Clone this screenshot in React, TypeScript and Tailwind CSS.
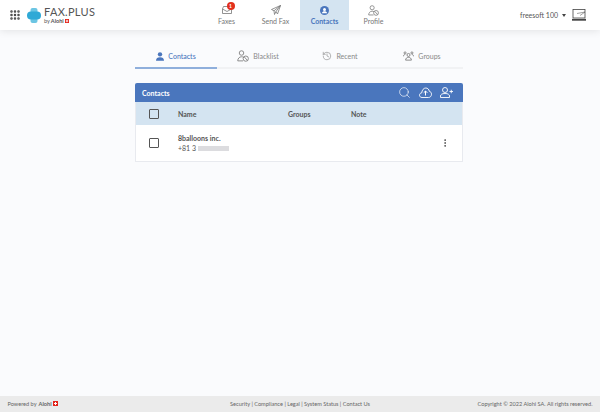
import { FC, ReactNode } from "react";
import { EllipsisVertical, Grip, History, Search } from "lucide-react";

const Flag: FC<{ size: number }> = ({ size }) => (
  <svg width={size} height={size} viewBox="0 0 10 10" className="shrink-0">
    <rect width="10" height="10" fill="#e2231a" />
    <path d="M4 2h2v2h2v2H6v2H4V6H2V4h2z" fill="#fff" />
  </svg>
);

const Logo = () => (
  <svg width="14" height="15" viewBox="0 0 14 15">
    <rect x="3.500" y="0" width="7" height="15" rx="2" fill="#6cc5e3" />
    <rect x="0" y="3.500" width="14" height="8" rx="4" fill="#2fa9d6" />
  </svg>
);

const MailIcon = () => (
  <svg width="10" height="8" viewBox="0 0 10 8" fill="none" stroke="#777" strokeWidth="0.8">
    <path d="M1.500 .5h7l1 2.500v4.500H.5V3z" />
    <path d="M.5 3 5 5.500 9.500 3" />
  </svg>
);

const PlaneIcon = () => (
  <svg width="10" height="10" viewBox="0 0 10 10" fill="none" stroke="#777" strokeWidth="0.8">
    <path d="M9.500 .5 .5 4.500l2.500 1.300L9.500 .5 5 6.500l1.500 2.500zM3 5.800 3.500 9.500 5 6.500" />
  </svg>
);

const UsersOutline: FC<{ size?: number }> = ({ size = 11 }) => (
  <svg width={size} height={size} viewBox="0 0 16 16" fill="none" stroke="#777" strokeWidth="1.100">
    <circle cx="6" cy="4" r="3" />
    <path d="M1 14.500c0-3 2-5.500 5-5.500 1 0 2 .3 2.700 .8" />
    <path d="M1 14.500h7" />
    <circle cx="11.700" cy="11.500" r="3.500" />
    <path d="M9.500 9l4.500 5" />
  </svg>
);

const GroupIcon = () => (
  <svg width="11" height="10" viewBox="0 0 16 14" fill="none" stroke="#777" strokeWidth="1.200">
    <circle cx="8" cy="5.500" r="2.200" />
    <path d="M3.800 13c0-2.600 1.800-4 4.200-4s4.200 1.400 4.200 4z" />
    <circle cx="3" cy="2.500" r="1.500" />
    <circle cx="13" cy="2.500" r="1.500" />
    <path d="M.5 7.500c0-1.500 1-2.500 2.500-2.500M15.500 7.500c0-1.500-1-2.500-2.500-2.500" />
  </svg>
);

const PersonSolid: FC<{ color: string }> = ({ color }) => (
  <svg width="8" height="9" viewBox="0 0 11 12" fill={color}>
    <circle cx="5.500" cy="3" r="3" />
    <path d="M0 12c0-3.600 2-5 5.500-5s5.500 1.400 5.500 5z" />
  </svg>
);

const ContactBadge = () => (
  <svg width="9" height="9" viewBox="0 0 12 12">
    <circle cx="6" cy="6" r="6" fill="#4a76bd" />
    <circle cx="6" cy="4.500" r="2" fill="#fff" />
    <path d="M2.500 9.500c.5-1.800 1.800-2.500 3.500-2.500s3 .7 3.500 2.500z" fill="#fff" />
  </svg>
);

const Laptop = () => (
  <svg width="14" height="12" viewBox="0 0 14 12" fill="none" stroke="#444" strokeWidth="0.8">
    <rect x="1" y="0.500" width="12" height="8.500" />
    <path d="M5 4.500l8-1.500M8 6.500l5-3.500" strokeWidth="0.5" />
    <path d="M0 10.800h14" strokeWidth="1.800" />
  </svg>
);

const CloudIcon = () => (
  <svg width="13" height="11" viewBox="0 0 13 11" fill="none" stroke="#fff" strokeWidth="0.9">
    <path d="M3 10.500C1.500 10.500.5 9.500.5 8.200c0-1.300 1-2.300 2.200-2.300C3 3 4.700 1 6.800 1c1.900 0 3.300 1.500 3.500 3.300 1.300.2 2.200 1.400 2.200 2.900 0 1.800-1.200 3.300-3 3.300z" />
    <path d="M6.500 8.500V4M4.700 5.800 6.500 4l1.800 1.800" strokeWidth="1" />
  </svg>
);

const AddUserIcon = () => (
  <svg width="13" height="11" viewBox="0 0 13 11" fill="none" stroke="#fff" strokeWidth="0.9">
    <circle cx="5" cy="3" r="2.500" />
    <path d="M.5 10.500V9c0-1.500 1.500-2.500 4.500-2.500S9.500 7.500 9.500 9v1.500z" />
    <path d="M9.500 4.500h3.500M11.250 2.750v3.500" />
  </svg>
);

const NavItem: FC<{ label: string; icon: ReactNode; active?: boolean }> = ({
  label,
  icon,
  active,
}) => (
  <div
    className={`w-[49px] h-full flex flex-col items-center pt-[5px] ${
      active ? "bg-[#d4e4f1] text-[#4a76bd] font-bold" : "text-[#777]"
    }`}
  >
    <div className="h-[10px] flex items-center justify-center relative">{icon}</div>
    <span className="text-[7px] leading-[10px] mt-[1px]">{label}</span>
  </div>
);

const TabItem: FC<{ label: string; icon: ReactNode; active?: boolean }> = ({
  label,
  icon,
  active,
}) => (
  <div
    className={`flex-1 flex items-center justify-center gap-[4px] text-[7px] border-b-2 ${
      active
        ? "border-[#8fafdc] text-[#4a76bd] font-medium"
        : "border-[#f1f2f4] text-[#888]"
    }`}
  >
    {icon}
    <span>{label}</span>
  </div>
);

const Checkbox = () => (
  <div className="w-[8px] h-[8px] border border-[#555] rounded-[1px] box-content" />
);

const rowColumns = "grid grid-cols-[42px_110px_63px_1fr_35px] items-center";

export default function App() {
  return (
    <div className="w-[600px] h-[412px] flex flex-col bg-[#fafbfd] font-['Lato','Noto_Sans',sans-serif] overflow-hidden">
      <header className="h-[30px] shrink-0 bg-white flex items-center shadow-[0_1px_8px_rgba(0,0,0,0.1)] relative">
        <div className="w-[202px] flex items-center h-full">
          <Grip size={12} strokeWidth={3} color="#444" className="ml-[9px]" />
          <div className="ml-[6px]">
            <Logo />
          </div>
          <div className="ml-[3px] flex flex-col">
            <span className="text-[11px] leading-[12px] text-[#555] tracking-[0.3px]">FAX.PLUS</span>
            <span className="flex items-center gap-[1px] text-[5.500px] leading-[7px] text-[#555]">
              by <b>Alohi</b> <Flag size={4} />
            </span>
          </div>
        </div>

        <nav className="flex h-full">
          <NavItem
            label="Faxes"
            icon={
              <>
                <MailIcon />
                <span className="absolute -top-[3px] left-[5px] w-[8px] h-[8px] rounded-full bg-[#e2301c] text-white text-[5px] leading-[8px] text-center font-bold">
                  1
                </span>
              </>
            }
          />
          <NavItem label="Send Fax" icon={<PlaneIcon />} />
          <NavItem label="Contacts" icon={<ContactBadge />} active />
          <NavItem label="Profile" icon={<UsersOutline />} />
        </nav>

        <div className="ml-auto flex items-center mr-[14px]">
          <span className="text-[7px] text-[#555]">freesoft 100</span>
          <span className="ml-[4px] mr-[6px] w-0 h-0 border-x-[2.500px] border-x-transparent border-t-[3px] border-t-[#444]" />
          <Laptop />
        </div>
      </header>

      <main className="flex-1 pl-[135px] pr-[137px] pt-[15px]">
        <div className="flex h-[24px]">
          <TabItem label="Contacts" icon={<PersonSolid color="#4a76bd" />} active />
          <TabItem label="Blacklist" icon={<UsersOutline size={12} />} />
          <TabItem label="Recent" icon={<History size={10} strokeWidth={1.300} color="#777" />} />
          <TabItem label="Groups" icon={<GroupIcon />} />
        </div>

        <section className="mt-[14px] border border-[#e8eaef] border-t-0 rounded-t-[2px]">
          <div className="-mx-px h-[19px] bg-[#4a76bd] rounded-t-[2px] flex items-center pl-[7px] pr-[10px] text-white">
            <span className="text-[7px] font-bold pt-[1px]">Contacts</span>
            <div className="ml-auto flex items-center gap-[8px]">
              <Search size={13} strokeWidth={1.200} />
              <CloudIcon />
              <AddUserIcon />
            </div>
          </div>

          <div className={`${rowColumns} h-[23px] pt-[1px] bg-[#d4e4f1] text-[7px] font-bold text-[#555]`}>
            <div className="flex justify-center pr-[6px]">
              <Checkbox />
            </div>
            <span>Name</span>
            <span>Groups</span>
            <span>Note</span>
          </div>

          <div className={`${rowColumns} h-[36px] bg-white text-[7px] text-[#555]`}>
            <div className="flex justify-center pr-[6px]">
              <Checkbox />
            </div>
            <div className="flex flex-col leading-[10px]">
              <span className="font-bold">8balloons inc.</span>
              <span className="flex items-center gap-[2px]">
                +81 3 <span className="w-[31px] h-[5px] bg-[#dcdcdf]" />
              </span>
            </div>
            <span />
            <span />
            <div className="flex justify-center">
              <EllipsisVertical size={10} strokeWidth={2} color="#444" />
            </div>
          </div>
        </section>
      </main>

      <footer className="h-[16px] shrink-0 bg-[#ebebeb] grid grid-cols-3 items-center px-[7.500px] text-[5.600px] text-[#666]">
        <div className="flex items-center gap-[1px]">
          Powered by <b className="ml-[1px]">Alohi</b> <Flag size={5} />
        </div>
        <div className="text-center whitespace-nowrap">
          Security | Compliance | Legal | System Status | Contact Us
        </div>
        <div className="text-right whitespace-nowrap">Copyright © 2022 Alohi SA. All rights reserved.</div>
      </footer>
    </div>
  );
}
